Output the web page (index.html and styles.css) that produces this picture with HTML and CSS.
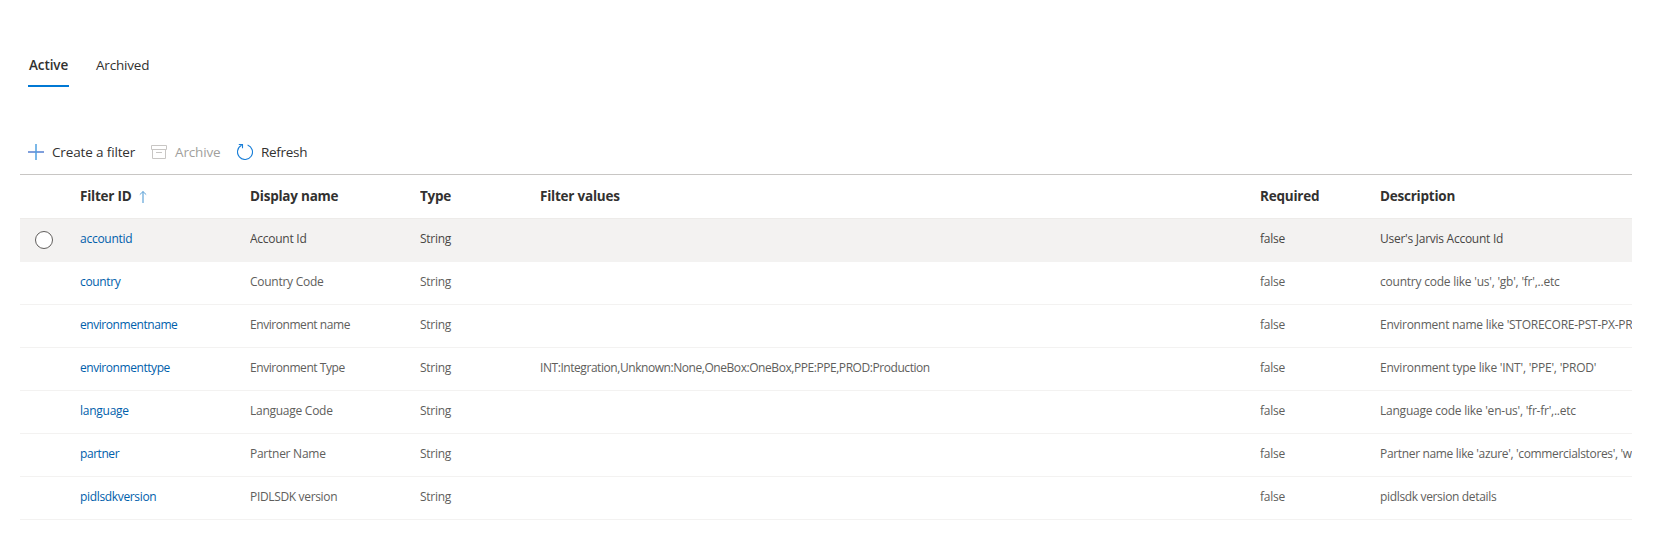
FILE: index.html
```
<!DOCTYPE html>
<html lang="en">
<head>
<meta charset="utf-8">
<title>Filters</title>
<link rel="stylesheet" href="styles.css">
</head>
<body>
<main class="page">
  <nav class="tabs">
    <a class="tab tab-active">Active</a>
    <a class="tab">Archived</a>
  </nav>
  <div class="commands">
    <button class="command c-create"><svg class="icon" viewBox="0 0 16 16"><path d="M0 8h16" stroke="#7f9fdc" stroke-width="2"/><path d="M8 0v16" stroke="#4fa0e0" stroke-width="1.5"/></svg><span>Create a filter</span></button>
    <button class="command c-archive"><svg class="icon" viewBox="0 0 16 16" fill="none" stroke="#c8c6c4"><path d="M.5 1.5h15v4H.5zM1.5 5.5v9h13v-9M5 8.5h6"/></svg><span>Archive</span></button>
    <button class="command c-refresh"><svg class="icon" viewBox="0 0 16 16" fill="none" stroke="#1a7fd8" stroke-width="1.1"><path d="M10.6 .95A7.5 7.5 0 1 1 4.6 1.3M1.8 .5H5.5V4.3"/></svg><span>Refresh</span></button>
  </div>
  <section class="grid">
    <div class="row head">
      <span></span><span class="cell">Filter ID<svg class="sort" viewBox="0 0 8 12" fill="none"><path d="M4 .5V12" stroke="#5fa3d8" stroke-width="1.2"/><path d="M.8 3.6L4 .6l3.2 3" stroke="#5fa3d8"/></svg></span><span class="cell">Display name</span><span class="cell">Type</span><span class="cell">Filter values</span><span class="cell">Required</span><span class="cell">Description</span>
    </div>
    <div class="row hover"><span class="radio"></span><a class="cell link">accountid</a><span class="cell">Account Id</span><span class="cell">String</span><span class="cell"></span><span class="cell">false</span><span class="cell">User's Jarvis Account Id</span></div>
    <div class="row"><span></span><a class="cell link snug">country</a><span class="cell">Country Code</span><span class="cell">String</span><span class="cell"></span><span class="cell">false</span><span class="cell loose">country code like 'us', 'gb', 'fr',..etc</span></div>
    <div class="row"><span></span><a class="cell link tight">environmentname</a><span class="cell tight">Environment name</span><span class="cell">String</span><span class="cell"></span><span class="cell">false</span><span class="cell">Environment name like 'STORECORE-PST-PX-PR</span></div>
    <div class="row"><span></span><a class="cell link tight">environmenttype</a><span class="cell tight">Environment Type</span><span class="cell">String</span><span class="cell tight">INT:Integration,Unknown:None,OneBox:OneBox,PPE:PPE,PROD:Production</span><span class="cell">false</span><span class="cell loose">Environment type like 'INT', 'PPE', 'PROD'</span></div>
    <div class="row"><span></span><a class="cell link">language</a><span class="cell">Language Code</span><span class="cell">String</span><span class="cell"></span><span class="cell">false</span><span class="cell loose">Language code like 'en-us', 'fr-fr',..etc</span></div>
    <div class="row"><span></span><a class="cell link tight">partner</a><span class="cell">Partner Name</span><span class="cell">String</span><span class="cell"></span><span class="cell">false</span><span class="cell snug">Partner name like 'azure', 'commercialstores', 'w</span></div>
    <div class="row"><span></span><a class="cell link snug">pidlsdkversion</a><span class="cell snug">PIDLSDK version</span><span class="cell">String</span><span class="cell"></span><span class="cell">false</span><span class="cell snug">pidlsdk version details</span></div>
  </section>
</main>
</body>
</html>
```
FILE: styles.css
```
* { box-sizing: border-box; }
body { margin: 0; background: #fff; color: #323130; font-family: "Open Sans", "Noto Sans", sans-serif; }
.page { width: 1632px; padding: 43px 0 0 20px; overflow: hidden; }
.tabs { display: flex; gap: 26px; height: 44px; padding-left: 8px; }
.tab { height: 44px; padding: 0 1px; font-size: 13.5px; line-height: 44px; white-space: nowrap; letter-spacing: -.18px; }
.tab-active { width: 41px; border-bottom: 2px solid #0078d4; font-weight: 600; letter-spacing: -.1px; }
.commands { display: flex; gap: 16px; height: 44px; margin-top: 43px; padding-left: 8px; align-items: center; }
.command { display: flex; align-items: center; gap: 8px; padding: 0; border: 0; background: none; font: 13.5px/20px "Open Sans", sans-serif; letter-spacing: -.3px; color: #323130; white-space: nowrap; }
.c-create { width: 107px; letter-spacing: -.14px; }
.c-archive { width: 70px; letter-spacing: -.15px; color: #a19f9d; }
.icon { flex: none; width: 16px; height: 16px; }
.grid { border-top: 1px solid #c8c6c4; }
.row { display: grid; grid-template-columns: 60px 170px 170px 120px 720px 120px 252px; height: 43px; border-bottom: 1px solid #f3f2f1; color: #605e5c; font-size: 12px; line-height: 39px; letter-spacing: -.26px; }
.cell { white-space: nowrap; overflow: hidden; }
.loose { letter-spacing: -.23px; }
.snug { letter-spacing: -.34px; }
.tight { letter-spacing: -.44px; }
.head { height: 44px; border-bottom-color: #edebe9; color: #323130; font-size: 13.5px; font-weight: 700; line-height: 43px; letter-spacing: -.23px; }
.sort { width: 8px; height: 12px; margin-left: 7px; vertical-align: -2px; }
.hover { background: #f3f2f1; color: #484644; }
.radio { width: 18px; height: 18px; margin: 12px 0 0 15px; border: 1px solid #605e5c; border-radius: 50%; background: #fff; }
.link { color: #0060ab; }
```
